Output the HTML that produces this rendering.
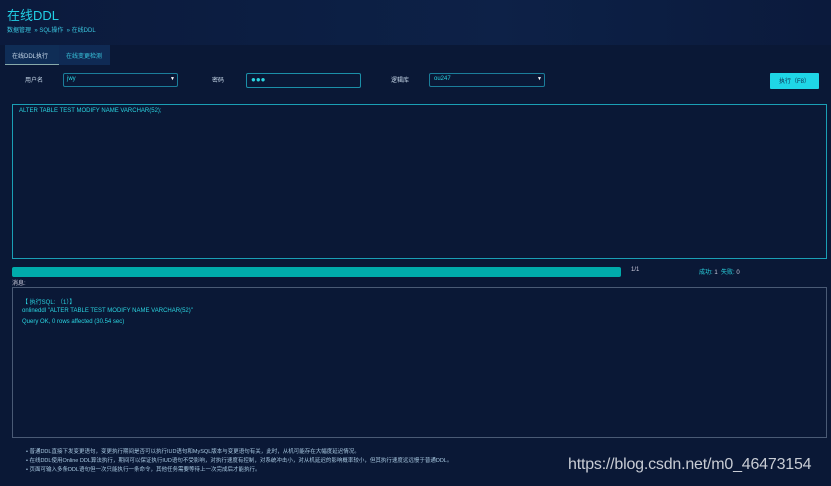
<!DOCTYPE html>
<html><head><meta charset="utf-8"><style>
*{margin:0;padding:0;box-sizing:border-box}
body{width:831px;height:486px;overflow:hidden;background:#0a1836;font-family:"Liberation Sans","Noto Sans CJK SC",sans-serif;color:#2ad4e0;position:relative}
.a{position:absolute}
.t{font-size:6px;white-space:nowrap}
</style></head><body>
<div class="a" style="left:0;top:0;width:831px;height:45px;background:linear-gradient(90deg,#0b1a3c,#0d2147 60%,#0b1a3c)"></div>
<div class="a" style="left:7px;top:5px;font-size:13px;color:#22d0e6">在线DDL</div>
<div class="a t" style="left:7px;top:25px;color:#3ac8e0">数据管理 &nbsp;» SQL操作 &nbsp;» 在线DDL</div>
<div class="a" style="left:5px;top:45px;width:54px;height:20px;background:#0f2d56;border-bottom:1px solid #8aa;"></div>
<div class="a t" style="left:12px;top:51px;color:#cde">在线DDL执行</div>
<div class="a" style="left:59px;top:45px;width:51px;height:20px;background:#0f2a54"></div>
<div class="a t" style="left:66px;top:51px;color:#3ac8e0">在线变更检测</div>
<div class="a t" style="left:25px;top:75px;color:#cde">用户名</div>
<div class="a" style="left:63px;top:73px;width:115px;height:14px;border:1px solid #1b7d9a;border-radius:2px"></div>
<div class="a t" style="left:67px;top:76px">jwy</div><div class="a" style="left:170px;top:76px;font-size:5px;color:#fff">▼</div>
<div class="a t" style="left:212px;top:75px;color:#cde">密码</div>
<div class="a" style="left:246px;top:73px;width:115px;height:15px;border:1px solid #1b8fa8;border-radius:2px"></div>
<div class="a" style="left:251px;top:75px;font-size:8px">●●●</div>
<div class="a t" style="left:391px;top:75px;color:#cde">逻辑库</div>
<div class="a" style="left:429px;top:73px;width:116px;height:14px;border:1px solid #1b7d9a;border-radius:2px"></div>
<div class="a t" style="left:434px;top:76px">ou247</div><div class="a" style="left:537px;top:76px;font-size:5px;color:#fff">▼</div>
<div class="a" style="left:770px;top:73px;width:49px;height:16px;background:#1fd6e6;border-radius:1px"></div>
<div class="a t" style="left:779px;top:76px;color:#0c3050">执行（F8）</div>
<div class="a" style="left:12px;top:104px;width:815px;height:155px;border:1px solid #1a9fb5"></div>
<div class="a t" style="left:19px;top:108px">ALTER TABLE TEST MODIFY NAME VARCHAR(52);</div>
<div class="a" style="left:12px;top:267px;width:609px;height:10px;background:#00abab;border-radius:2px"></div>
<div class="a t" style="left:631px;top:267px;color:#ccd">1/1</div>
<div class="a t" style="left:699px;top:267px">成功: <span style="color:#ccd">1</span> &nbsp;失败: <span style="color:#ccd">0</span></div>
<div class="a t" style="left:12px;top:278px;color:#ccd">消息:</div>
<div class="a" style="left:12px;top:287px;width:815px;height:151px;border:1px solid #4a5a75"></div>
<div class="a t" style="left:22px;top:297px">【 执行SQL: （1）】</div>
<div class="a t" style="left:22px;top:308px">onlineddl "ALTER TABLE TEST MODIFY NAME VARCHAR(52)"</div>
<div class="a t" style="left:22px;top:319px">Query OK, 0 rows affected (30.54 sec)</div>
<div class="a t" style="left:26px;top:447px;font-size:5.5px;color:#a8c8e0">• 普通DDL直接下发变更语句，变更执行期间是否可以执行IUD语句和MySQL版本与变更语句有关，此时，从机可能存在大幅度延迟情况。</div>
<div class="a t" style="left:26px;top:456px;font-size:5.5px;color:#a8c8e0">• 在线DDL使用Online DDL算法执行，期间可以保证执行IUD语句不受影响，对执行速度有控制，对系统冲击小，对从机延迟的影响概率较小，但其执行速度远远慢于普通DDL。</div>
<div class="a t" style="left:26px;top:465px;font-size:5.5px;color:#a8c8e0">• 页面可输入多条DDL语句但一次只能执行一条命令，其他任务需要等待上一次完成后才能执行。</div>
<div class="a" style="left:568px;top:456px;font-size:16px;color:#c8ccd4;white-space:nowrap;letter-spacing:-0.2px">https://blog.csdn.net/m0_46473154</div>
</body></html>
